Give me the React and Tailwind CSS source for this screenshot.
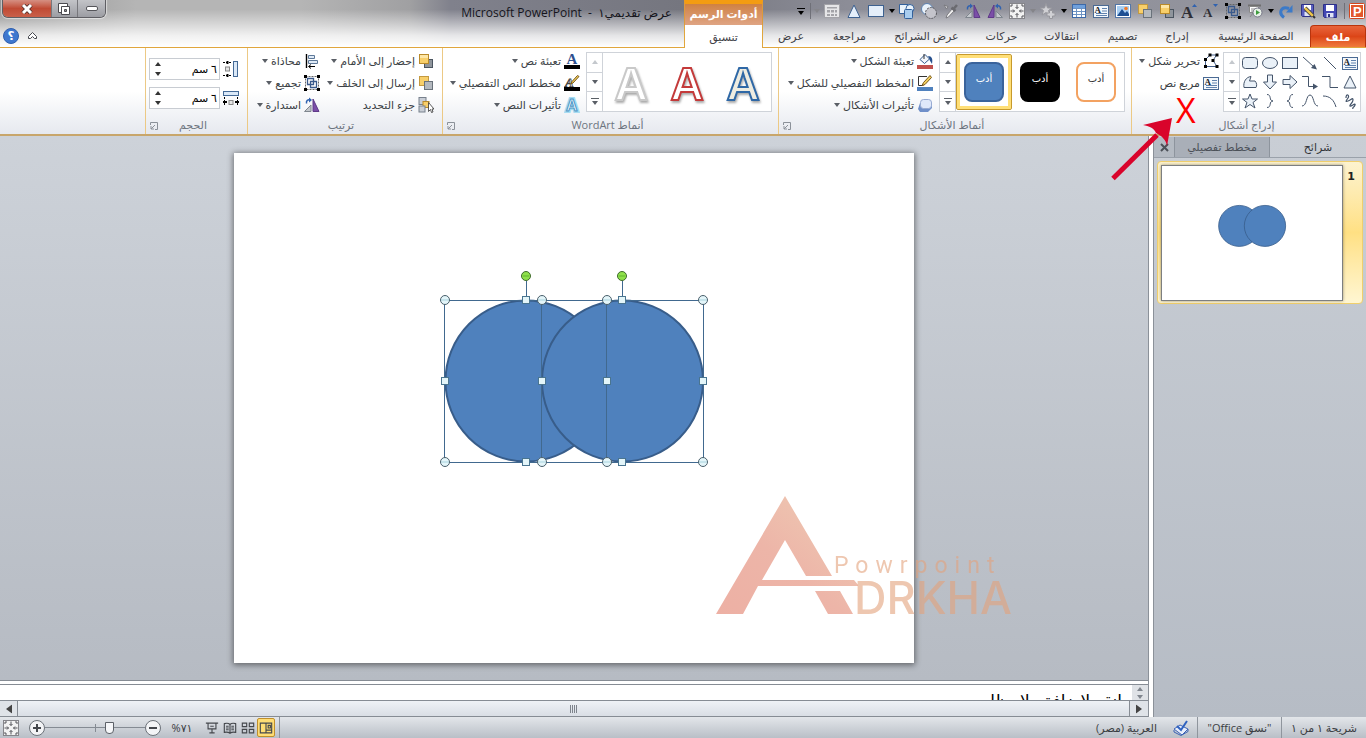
import { useState } from 'react';
import clsx from 'clsx';

const LINE = '#44546a';

const Svg = ({ size = 16, children, className }) => (
  <svg width={size} height={size} viewBox="0 0 16 16" fill="none" className={clsx('shrink-0 [direction:ltr]', className)} aria-hidden="true">
    {children}
  </svg>
);

/* ---------- icons ---------- */

const TextBoxIcon = () => (
  <Svg>
    <rect x="0.5" y="2.5" width="15" height="12" fill="#f4f8fc" stroke="#4a6a94" />
    <text x="1.5" y="9.5" fontSize="9" fontWeight="bold" fill="#222" fontFamily="Liberation Serif, serif">A</text>
    <path d="M9 5.5h5M9 8h5M3 10.5h11M3 12.5h11" stroke="#5f82ae" />
  </Svg>
);

const SaveIcon = () => (
  <Svg>
    <path d="M1.5 1.5h13v13h-12l-1-1z" fill="#4348b4" stroke="#2d3187" />
    <rect x="4" y="2" width="8" height="6" fill="#fff" />
    <rect x="4.5" y="10" width="7" height="4.5" fill="#dfe4f5" />
    <rect x="6" y="11" width="2" height="3" fill="#2d3187" />
  </Svg>
);

const SaveAsIcon = () => (
  <Svg>
    <path d="M1.5 1.5h12v12h-11l-1-1z" fill="#5b60c0" stroke="#2d3187" />
    <rect x="4" y="2" width="7" height="5" fill="#fff" />
    <rect x="4.5" y="9" width="6" height="4" fill="#dfe4f5" />
    <path d="M5 5l8 8" stroke="#4a4a4a" strokeWidth="4" />
    <path d="M5 5l8 8" stroke="#f1c84b" strokeWidth="2.4" />
    <path d="M13 13l2 2" stroke="#333" strokeWidth="2" />
  </Svg>
);

const RedoIcon = () => (
  <Svg>
    <path d="M6 14.5C0 10 3 2.500 11 5.500" stroke="#3c7ac8" strokeWidth="3" />
    <path d="M8 9.500h6.500V2z" fill="#3c7ac8" />
  </Svg>
);

const ShowIcon = () => (
  <Svg>
    <path d="M1 2.5h13" stroke="#6f6f6f" strokeWidth="2" />
    <path d="M2.5 3.5h9v6h-9z" fill="#fff" stroke="#888" />
    <path d="M4 6h5M4 8h4M6 10l-3 4" stroke="#888" />
    <circle cx="10.5" cy="9.5" r="4.5" fill="#e8f0e8" stroke="#778" />
    <path d="M9 7l4 2.5L9 12z" fill="#3d9b3d" />
  </Svg>
);

const GroupIcon = () => (
  <Svg>
    <path d="M1.5 1.5h13v13h-13z" stroke="#666" strokeDasharray="2 1" />
    <path d="M3.500 3.500h6v6h-6zM6.500 6.500h6v6h-6z" stroke="#3a5a8c" strokeWidth="1.300" />
    <path d="M0 0h3v3H0zM13 0h3v3h-3zM0 13h3v3H0zM13 13h3v3h-3z" fill="#000" />
  </Svg>
);

const FontSizeIcon = ({ up }) => (
  <Svg>
    <text x="0" y={up ? 15 : 14} fontSize={up ? 17 : 13} fontWeight="bold" fill="#2f2f36" fontFamily="Liberation Serif, serif">A</text>
    {up ? <path d="M11 4l2.5-3L16 4z" fill="#2f62b0" /> : <path d="M10 1h5l-2.500 3z" fill="#2f62b0" />}
  </Svg>
);

const FrontIcon = () => (
  <Svg>
    <rect x="6.500" y="6.500" width="8" height="8" fill="#8f959c" stroke="#4b5560" />
    <rect x="1.500" y="1.500" width="9" height="9" fill="#f8cf6a" stroke="#b98a2a" />
    <path d="M2 2h8v3H2z" fill="#fde6a6" />
  </Svg>
);

const BackIcon = () => (
  <Svg>
    <rect x="1.500" y="1.500" width="9" height="9" fill="#f8cf6a" stroke="#c49a41" />
    <rect x="6.500" y="6.500" width="8" height="8" fill="#b4b9bf" stroke="#6a727b" />
  </Svg>
);

const PictureIcon = () => (
  <Svg>
    <rect x="0.500" y="1.500" width="15" height="13" fill="#fff" stroke="#5377a8" />
    <rect x="2" y="3" width="12" height="10" fill="#a9cff3" />
    <path d="M2 13l5-7 3 4 2-2 2 3v2z" fill="#1d4f93" />
    <circle cx="11" cy="5.500" r="1.800" fill="#f07a2a" />
  </Svg>
);

const TableIcon = () => (
  <Svg>
    <rect x="1.500" y="1.500" width="13" height="13" fill="#fff" stroke="#3d69a8" />
    <path d="M2 2h12v3H2z" fill="#6fa0dc" />
    <path d="M2 5.500h12M2 8.500h12M2 11.500h12M5.500 5v9M10.500 5v9" stroke="#6d93c4" />
  </Svg>
);

const StarsIcon = () => (
  <Svg>
    <path d="M6 0.500l1.500 4.500H12L8.500 7.500 10 12 6 9.500 2 12l1.500-4.500L0 5h4.500z" fill="#d0d0d4" stroke="#98989e" />
    <path d="M9.500 7.500h3v2.500h2.500v3h-2.500v2.500h-3v-2.500H7v-3h2.500z" fill="#d0d0d4" stroke="#98989e" />
  </Svg>
);

const FitIcon = () => (
  <Svg>
    <rect x="0.500" y="0.500" width="15" height="15" fill="#f2f2f2" stroke="#85858a" />
    <path d="M8 1.500v4M8 10.500v4M1.500 8h4M10.500 8h4M6.500 4L8 5.500 9.500 4M6.500 12L8 10.500 9.500 12M4 6.500L5.500 8 4 9.500M12 6.500L10.500 8 12 9.500" stroke="#55555a" />
    <path d="M2 4V2h2M12 2h2v2M14 12v2h-2M4 14H2v-2" stroke="#55555a" />
  </Svg>
);

const FlipIcon = ({ mirror }) => (
  <Svg className={mirror ? '-scale-x-100' : ''}>
    <path d="M9 2v12.500h6z" fill="#7b4ea8" stroke="#5f3a88" />
    <path d="M7 8v6.500H0.500z" fill="#c3c7cc" stroke="#7f868e" />
    <path d="M2.500 6.500C2 3.500 4 2.500 6 3" stroke="#2f62b0" strokeWidth="1.500" />
    <path d="M5 0.500L8 3 5 5.500z" fill="#2f62b0" />
  </Svg>
);

const DropperIcon = () => (
  <Svg>
    <path d="M3 15l1-3 5-6 2 2-5.500 6z" fill="#eee" stroke="#7b7b80" />
    <path d="M8.500 4.500l4 3.500M10.500 6l3.500-4" stroke="#6a6a70" strokeWidth="2.500" />
    <path d="M1 2l4 1.500-1.500 2.500z" fill="#d5d5d9" stroke="#7b7b80" />
  </Svg>
);

const SubtractIcon = () => (
  <Svg>
    <circle cx="6" cy="6" r="5.500" fill="#eaf3fb" stroke="#5d82b0" />
    <circle cx="10" cy="10" r="5.500" fill="#c4c4cb" stroke="#55555a" strokeDasharray="2 1" />
  </Svg>
);

const UnionIcon = () => (
  <Svg>
    <path d="M0.500 1.500h9v9h-9z" fill="#eaf3fb" stroke="#33619b" />
    <circle cx="11" cy="5.500" r="4" fill="#eaf3fb" stroke="#33619b" />
    <rect x="5.500" y="6.500" width="8" height="9" rx="1" fill="#a9cdef" stroke="#33619b" />
  </Svg>
);

const RectIcon = () => (
  <Svg>
    <rect x="0.500" y="2.500" width="15" height="11" fill="#e4eefa" stroke="#3d6190" />
  </Svg>
);

const TriangleIcon = () => (
  <Svg>
    <path d="M8 2l6 12.500H2z" fill="#e4eefa" stroke="#3d6190" />
  </Svg>
);

const GridGreyIcon = () => (
  <Svg>
    <rect x="0.500" y="1.500" width="15" height="13" fill="#e6e6e8" stroke="#a3a3a8" />
    <path d="M3 4h10v1.500H3zM3 7h3v2.500H3zM7 7h3v2.500H7zM11 7h2v2.500h-2zM3 11h3v2H3zM7 11h3v2H7zM11 11h2v2h-2z" fill="#a3a3a8" />
  </Svg>
);

const EditShapeIcon = () => (
  <Svg>
    <path d="M2.500 13.500V6.500L7 2h6.500L10 7.500l4 6z" stroke="#44608c" />
    <path d="M5.500 0.500h3v3h-3zM12.500 0.500h3v3h-3zM1 5h3v3H1zM8.500 6h3v3h-3zM1 12h3v3H1zM12.500 12h3v3h-3z" fill="#000" />
  </Svg>
);

const FillShapeIcon = () => (
  <Svg>
    <path d="M3 6.500L8 1.500l4.500 4.500-5 4.500z" fill="#f3f6fa" stroke="#345a8c" />
    <path d="M7 1v5" stroke="#333" />
    <path d="M11 3c4 0 5 3 4 8-1-2-3-4-3-6z" fill="#26508e" />
    <rect y="12" width="16" height="4" fill="#c0504d" />
  </Svg>
);

const OutlineShapeIcon = () => (
  <Svg>
    <path d="M10 1.500H1.500v9h5" stroke="#333" />
    <path d="M14.500 2.500L8 9.500l-3 1 1.500-3L13 0.500z" fill="#f0cd5c" stroke="#7a5a1c" />
    <rect y="12" width="16" height="4" fill="#4f81bd" />
  </Svg>
);

const EffectsShapeIcon = () => (
  <Svg>
    <path d="M3 6l-2 6 2 3h8l4-4V5z" fill="#6f8fc9" />
    <rect x="3.500" y="2.500" width="11" height="9" rx="3" fill="#dfe8fa" stroke="#98abd2" />
  </Svg>
);

const FillTextIcon = () => (
  <Svg>
    <text x="2.500" y="11" fontSize="15" fontWeight="bold" fill="#2e4f8e" fontFamily="Liberation Serif, serif">A</text>
    <rect y="12" width="16" height="4" fill="#000" />
  </Svg>
);

const OutlineTextIcon = () => (
  <Svg>
    <text x="1" y="11.500" fontSize="13" fontStyle="italic" fontWeight="bold" fill="#fff" stroke="#444" strokeWidth="0.800" fontFamily="Liberation Serif, serif">A</text>
    <path d="M15 1.500L9 8l-2.500 1L8 6.500 13.500 0.500z" fill="#f0cd5c" stroke="#7a5a1c" />
    <rect y="12" width="16" height="4" fill="#000" />
  </Svg>
);

const EffectsTextIcon = () => (
  <Svg>
    <text x="2" y="14" fontSize="16" fontWeight="bold" fill="#fff" stroke="#a6dcf2" strokeWidth="4" fontFamily="Liberation Sans, sans-serif">A</text>
    <text x="2" y="14" fontSize="16" fontWeight="bold" fill="#f2fbff" stroke="#4c94c4" fontFamily="Liberation Sans, sans-serif">A</text>
  </Svg>
);

const SelectionPaneIcon = () => (
  <Svg>
    <rect x="1" y="0.500" width="7" height="7" fill="#c9ced6" stroke="#77808c" />
    <rect x="5" y="4.500" width="6" height="6" fill="#f8cf6a" stroke="#b98a2a" />
    <rect x="1" y="9" width="6" height="6" fill="#c9ced6" stroke="#77808c" />
    <path d="M10.500 5.500v9l2-2 1 3 1.500-0.500-1-3h2z" fill="#fff" stroke="#333" strokeWidth="0.800" />
  </Svg>
);

const AlignIcon = () => (
  <Svg>
    <path d="M2.500 1v14" stroke="#000" strokeWidth="1.400" />
    <path d="M4.500 2.500h6v3h-6zM4.500 7.500h9v3h-9z" fill="#dfeaf6" stroke="#5d7898" />
    <path d="M5 13.500h6M7 11.500l-2.500 2L7 15.500" stroke="#000" />
  </Svg>
);

const HeightIcon = () => (
  <Svg>
    <rect x="10.500" y="0.500" width="4" height="15" fill="#dbe9f8" stroke="#456a96" />
    <path d="M0 1.500h9M0 14.500h9" stroke="#000" strokeDasharray="2 1" />
    <path d="M4.500 0v3M4.500 13v3" stroke="#000" strokeWidth="2" />
    <rect x="2.500" y="6" width="4" height="4" fill="#e5e5e5" stroke="#888" />
  </Svg>
);

const WidthIcon = () => (
  <Svg>
    <rect x="0.500" y="1.500" width="15" height="4" fill="#dbe9f8" stroke="#456a96" />
    <path d="M1.500 7v9M14.500 7v9" stroke="#000" strokeDasharray="2 1" />
    <path d="M0 12h4M12 12h4" stroke="#000" strokeWidth="2" />
    <rect x="6" y="10.500" width="4" height="4" fill="#e5e5e5" stroke="#888" />
  </Svg>
);

/* ---------- small parts ---------- */

const Caret = ({ className = 'text-[#5a5f66]' }) => (
  <svg width="6" height="4" viewBox="0 0 6 4" className={clsx('shrink-0', className)} aria-hidden="true">
    <path d="M0 0h6L3 4z" fill="currentColor" />
  </svg>
);

const GalleryScroll = ({ firstDisabled }) => (
  <div className="flex w-4 flex-col border-r border-[#cfd3d9] bg-white">
    <button aria-label="أعلى" className="flex flex-1 items-center justify-center border-b border-[#cfd3d9]">
      <Caret className={clsx('rotate-180', firstDisabled ? 'text-[#c4c8cd]' : 'text-[#5a5f66]')} />
    </button>
    <button aria-label="أسفل" className="flex flex-1 items-center justify-center border-b border-[#cfd3d9]">
      <Caret />
    </button>
    <button aria-label="المزيد" className="flex flex-1 flex-col items-center justify-center gap-0.5">
      <span className="h-px w-2 bg-[#5a5f66]" />
      <Caret />
    </button>
  </div>
);

const Gallery = ({ firstDisabled, children }) => (
  <div className="mt-1 flex h-[60px] border border-[#cfd3d9] bg-white">
    {children}
    <GalleryScroll firstDisabled={firstDisabled} />
  </div>
);

const Group = ({ title, launcher, className, children }) => (
  <section className={clsx('relative flex flex-col border-l border-l-[#ecc985]', className)}>
    <div className="flex h-[69px] items-start">{children}</div>
    <div className="flex flex-1 items-start justify-center text-[11px] leading-4 text-[#6d7580]">
      {title}
      {launcher && (
        <button aria-label="خيارات" className="absolute bottom-1 left-1">
          <svg width="8" height="8" viewBox="0 0 8 8" fill="none" stroke="#8b9199">
            <path d="M0.500 3V0.500H7.500V7.500H5M5 3L1 7M1 4v3h3" />
          </svg>
        </button>
      )}
    </div>
  </section>
);

const Command = ({ icon, label, caret }) => (
  <button className="flex h-[22px] items-center gap-[3px] whitespace-nowrap text-[11px] leading-4 text-[#3b3f45]">
    {icon}
    <span>{label}</span>
    {caret && <Caret />}
  </button>
);

/* ---------- title bar and tabs ---------- */

const QUICK = [
  { name: 'حفظ', icon: <SaveIcon /> },
  { name: 'حفظ باسم', icon: <SaveAsIcon /> },
  { name: 'إعادة', icon: <RedoIcon />, caret: 'text-black' },
  { name: 'عرض الشرائح', icon: <ShowIcon /> },
  { name: 'تجميع', icon: <GroupIcon /> },
  { name: 'تصغير الخط', icon: <FontSizeIcon /> },
  { name: 'تكبير الخط', icon: <FontSizeIcon up /> },
  { name: 'إلى الأمام', icon: <FrontIcon /> },
  { name: 'إلى الخلف', icon: <BackIcon /> },
  { name: 'صورة', icon: <PictureIcon /> },
  { name: 'مربع نص', icon: <TextBoxIcon /> },
  { name: 'جدول', icon: <TableIcon />, caret: 'text-black' },
  { name: 'حركة', icon: <StarsIcon />, caret: 'text-[#85858a]' },
  { name: 'احتواء', icon: <FitIcon /> },
  { name: 'انعكاس أفقي', icon: <FlipIcon mirror /> },
  { name: 'انعكاس عمودي', icon: <FlipIcon /> },
  { name: 'قطارة', icon: <DropperIcon /> },
  { name: 'طرح', icon: <SubtractIcon /> },
  { name: 'اتحاد', icon: <UnionIcon />, caret: 'text-black' },
  { name: 'مستطيل', icon: <RectIcon /> },
  { name: 'مثلث', icon: <TriangleIcon /> },
  { name: 'تخطيط', icon: <GridGreyIcon />, caret: 'text-[#85858a]' },
];

const TABS = [
  { label: 'الصفحة الرئيسية', width: 'w-[108px]' },
  { label: 'إدراج', width: 'w-[50px]' },
  { label: 'تصميم', width: 'w-[59px]' },
  { label: 'انتقالات', width: 'w-[63px]' },
  { label: 'حركات', width: 'w-[57px]' },
  { label: 'عرض الشرائح', width: 'w-[93px]' },
  { label: 'مراجعة', width: 'w-[61px]' },
  { label: 'عرض', width: 'w-[56px]' },
];

const TitleBar = () => (
  <div className="flex h-[25px]">
    <div className="flex h-[22px] items-center">
      <div className="flex w-[18px] justify-center">
        <Svg>
          <rect x="0.500" y="0.500" width="15" height="15" rx="1" fill="#fff" stroke="#d2451e" />
          <rect x="2" y="2" width="12" height="12" fill="#e2582c" />
          <text x="4" y="13" fontSize="13" fontWeight="bold" fill="#fff" fontFamily="Liberation Sans, sans-serif">P</text>
        </Svg>
      </div>
      <span className="mx-[3px] h-4 w-px bg-[#6f7078]" />
      {QUICK.map(({ name, icon, caret }) => (
        <button key={name} aria-label={name} className="flex items-center">
          <span className="flex w-[22px] justify-center">{icon}</span>
          {caret && <span className="flex w-[9px] justify-center"><Caret className={caret} /></span>}
        </button>
      ))}
      <span className="mx-px h-4 w-px bg-[#6f7078]" />
      <button aria-label="تخصيص" className="flex w-4 flex-col items-center gap-0.5">
        <span className="h-px w-2 bg-black" />
        <Caret className="text-black" />
      </button>
    </div>
    <div className="mr-auto flex w-[79px] items-center justify-center border-x border-t-4 border-[#f39c12] border-x-[#dd9a3c] bg-linear-to-b from-[#cf8142] to-[#dfa483] text-[11px] font-bold text-white">
      أدوات الرسم
    </div>
    <div className="flex w-[684px] justify-between pl-0.5">
      <h1 className="mr-3 pt-1 text-[12px] leading-[18px] text-[#15151c]">عرض تقديمي١&nbsp; -&nbsp; Microsoft PowerPoint</h1>
      <div className="flex h-[18px] overflow-hidden rounded-b-md border border-t-0 border-[#5e5e63] shadow-[0_0_1px_1px_#ffffff88]">
        <button aria-label="تصغير" className="flex w-[27px] items-center justify-center bg-linear-to-b from-[#c3c4c8] to-[#9c9da3]">
          <span className="h-[5px] w-3 rounded-xs border border-[#55555a] bg-white" />
        </button>
        <button aria-label="استعادة" className="flex w-[27px] items-center justify-center border-x border-[#77777c] bg-linear-to-b from-[#c3c4c8] to-[#9c9da3]">
          <svg width="13" height="12" viewBox="0 0 13 12" fill="none" stroke="#4b4b50">
            <path d="M0.500 0.500h9v9h-9z" fill="#fff" />
            <path d="M3.500 3.500h8v8h-8z" fill="#fff" />
            <path d="M6.500 6.500h2v2h-2z" fill="#999" />
          </svg>
        </button>
        <button aria-label="إغلاق" className="flex w-[48px] items-center justify-center bg-linear-to-b from-[#d58f82] via-[#c04a34] to-[#c9604a]">
          <svg width="12" height="10" viewBox="0 0 12 10">
            <path d="M2 1l8 8M10 1L2 9" stroke="#4c2a25" strokeWidth="4.500" />
            <path d="M2 1l8 8M10 1L2 9" stroke="#fff" strokeWidth="3" />
          </svg>
        </button>
      </div>
    </div>
  </div>
);

const TabRow = ({ active, onPick }) => (
  <nav className="relative z-20 flex h-[22px] text-[11px] leading-4 text-[#3f4147]">
    <button className="w-14 rounded-t-sm border border-b-0 border-[#b8340d] bg-linear-to-b from-[#e8643a] via-[#dc4517] to-[#f07a3c] font-bold text-white">ملف</button>
    {TABS.map(({ label, width }) => (
      <button key={label} onClick={() => onPick(label)} className={clsx('whitespace-nowrap', width)}>{label}</button>
    ))}
    <button
      onClick={() => onPick('تنسيق')}
      className={clsx('-mb-px mr-auto w-[79px] border-x border-[#e0a63d]', active === 'تنسيق' ? 'bg-white' : 'bg-[#f4e3cf]')}
    >
      تنسيق
    </button>
    <div className="flex w-[684px] items-center justify-end gap-[9px] pl-[3px]">
      <button aria-label="تصغير الشريط">
        <svg width="9" height="8" viewBox="0 0 9 8" fill="#fff" stroke="#44474d">
          <path d="M0.500 4.500l4-4 4 4v2h-2l-2-2-2 2h-2z" />
        </svg>
      </button>
      <button aria-label="تعليمات" className="flex size-4 items-center justify-center rounded-full border border-[#2f5fae] bg-[#3f78cf] font-['DejaVu_Sans'] text-[12px] leading-3 font-bold text-white">؟</button>
    </div>
  </nav>
);

/* ---------- ribbon ---------- */

const pale = '#eaf1f8';

const SHAPES = [
  ['مربع نص', <TextBoxIcon />],
  ['خط', <Svg><path d="M2 2l12 12" stroke={LINE} /></Svg>],
  ['سهم', <Svg><path d="M1 2l11 10" stroke={LINE} /><path d="M15 14.500l-6-1.500 3.500-4z" fill={LINE} /></Svg>],
  ['مستطيل', <Svg><rect x="0.500" y="2.500" width="15" height="11" fill={pale} stroke={LINE} /></Svg>],
  ['شكل بيضاوي', <Svg><ellipse cx="8" cy="8" rx="7.500" ry="5.500" fill={pale} stroke={LINE} /></Svg>],
  ['مستطيل مستدير', <Svg><rect x="0.500" y="2.500" width="15" height="11" rx="3" fill={pale} stroke={LINE} /></Svg>],
  ['مثلث', <Svg><path d="M8 2l6 12H2z" fill={pale} stroke={LINE} /></Svg>],
  ['رابط', <Svg><path d="M0 2.500h8v11h8" stroke={LINE} /></Svg>],
  ['رابط سهم', <Svg><path d="M0 2.500h6.500v10H12" stroke={LINE} /><path d="M11 9.500l5 3-5 3z" fill={LINE} /></Svg>],
  ['سهم أيمن', <Svg><path d="M1 5.500h7V1.500l7 6.500-7 6.500v-4H1z" fill={pale} stroke={LINE} /></Svg>],
  ['سهم سفلي', <Svg><path d="M5.500 1h5v7h4L8 15 1.500 8h4z" fill={pale} stroke={LINE} /></Svg>],
  ['شكل حر', <Svg><path d="M2 13.500C1 8 4 3 9 2.500L7.500 7h5.500c2 2 2 5 1 6.500z" fill={pale} stroke={LINE} /></Svg>],
  ['خربشة', <Svg><path d="M4 5c0-5 4-3 2 0s-3 4 0 3 5-4 5-1-4 5-3 6 6-4 5-1-3 2-2 4" stroke={LINE} strokeWidth="1.200" /></Svg>],
  ['قوس', <Svg><path d="M1 3c7 0 11 4 13 11" stroke={LINE} /></Svg>],
  ['منحنى', <Svg><path d="M0 13C5 13 4 2 8 2s3 11 8 11" stroke={LINE} /></Svg>],
  ['قوس أيسر', <Svg><path d="M11 1.500C6 1.500 9.500 8 5 8c4.500 0 1 6.500 6 6.500" stroke={LINE} /></Svg>],
  ['قوس أيمن', <Svg><path d="M5 1.500c5 0 1.500 6.500 6 6.500-4.500 0-1 6.500-6 6.500" stroke={LINE} /></Svg>],
  ['نجمة', <Svg><path d="M8 1l2 5h5.500l-4.500 3.500L13 15l-5-3.500L3 15l2-5.500L0.500 6H6z" fill={pale} stroke={LINE} /></Svg>],
];

const SHAPE_STYLES = [
  { name: 'برتقالي', box: 'border-[#f3a261] bg-white text-[#333]' },
  { name: 'أسود', box: 'border-black bg-black text-white' },
  { name: 'أزرق', box: 'border-[#3a639b] bg-[#4f81bd] text-white' },
];

const WORDART = [
  { name: 'أزرق', fill: '#eeece1', stroke: '#2f68a6' },
  { name: 'أحمر', fill: '#ffffff', stroke: '#c43a3a' },
  { name: 'رمادي', fill: '#ffffff', stroke: '#c9c9c9' },
];

const SizeField = ({ id, label, icon }) => (
  <div className="flex h-[22px] items-center gap-0.5">
    <label htmlFor={id} className="flex w-[18px] justify-center" aria-label={label}>{icon}</label>
    <div className="flex h-[22px] w-[71px] items-center border border-[#c8ccd2] bg-white">
      <input id={id} defaultValue="٦ سم" className="w-0 flex-1 bg-transparent pr-0.5 text-[11px] leading-4 text-black outline-none" />
      <div className="flex w-4 flex-col items-center gap-1.5">
        <Caret className="rotate-180 text-[#333]" />
        <Caret className="text-[#333]" />
      </div>
    </div>
  </div>
);

const Ribbon = () => {
  const [picked, setPicked] = useState('أزرق');

  return (
    <div className="relative z-10 flex h-[89px] border-t border-b-2 border-[#e0a63d] border-b-[#c8a66b] bg-linear-to-b from-white via-white to-[#e6e9ef]">
      <Group title="إدراج أشكال" className="w-[235px] pr-[5px]">
        <Gallery firstDisabled>
          <div className="grid w-[120px] grid-cols-6 place-items-center">
            {SHAPES.map(([name, icon]) => (
              <button key={name} aria-label={name}>{icon}</button>
            ))}
          </div>
        </Gallery>
        <div className="mr-1 pt-0.5">
          <Command icon={<EditShapeIcon />} label="تحرير شكل" caret />
          <Command icon={<TextBoxIcon />} label="مربع نص" />
        </div>
        <span className="absolute top-[42px] left-[44px] font-['Open_Sans'] text-[34px] leading-10 text-[#f00]">X</span>
        <svg width="66" height="66" viewBox="0 0 66 66" className="absolute top-[67px] -left-[22px]" aria-hidden="true">
          <path d="M3 63.500L47 20" stroke="#d9042b" strokeWidth="5" />
          <path d="M62 3L33 10c6 1 11 3 13 8 6 3 10 7 11 13z" fill="#d9042b" />
        </svg>
      </Group>

      <Group title="أنماط الأشكال" launcher className="w-[353px] pr-1.5">
        <Gallery>
          <div className="flex w-[168px]">
            {SHAPE_STYLES.map(({ name, box }) => (
              <button
                key={name}
                aria-label={name}
                onClick={() => setPicked(name)}
                className={clsx('my-px flex w-14 items-center justify-center rounded-xs border', picked === name ? 'border-[#c79a2c] bg-white shadow-[inset_0_0_0_3px_#ffdf77]' : 'border-transparent')}
              >
                <span className={clsx('flex size-10 items-center justify-center rounded-lg border-2 pb-2 text-[10px] leading-4', box)}>أدب</span>
              </button>
            ))}
          </div>
        </Gallery>
        <div className="mr-1.5 pt-0.5">
          <Command icon={<FillShapeIcon />} label="تعبئة الشكل" caret />
          <Command icon={<OutlineShapeIcon />} label="المخطط التفصيلي للشكل" caret />
          <Command icon={<EffectsShapeIcon />} label="تأثيرات الأشكال" caret />
        </div>
      </Group>

      <Group title="أنماط WordArt" launcher className="w-[336px] pr-1.5">
        <Gallery firstDisabled>
          <div className="flex w-[168px]">
            {WORDART.map(({ name, fill, stroke }) => (
              <button key={name} aria-label={name} className="flex w-14 items-center justify-center">
                <svg width="44" height="48" viewBox="0 0 44 48" className="drop-shadow-[1px_2px_1px_#00000055]">
                  <text x="22" y="42" textAnchor="middle" fontSize="46" fontWeight="bold" fill={fill} stroke={stroke} strokeWidth="2" fontFamily="Liberation Sans, sans-serif">A</text>
                </svg>
              </button>
            ))}
          </div>
        </Gallery>
        <div className="mr-1.5 pt-0.5">
          <Command icon={<FillTextIcon />} label="تعبئة نص" caret />
          <Command icon={<OutlineTextIcon />} label="مخطط النص التفصيلي" caret />
          <Command icon={<EffectsTextIcon />} label="تأثيرات النص" caret />
        </div>
      </Group>

      <Group title="ترتيب" className="w-[195px] pr-2">
        <div className="w-[114px] pt-0.5">
          <Command icon={<FrontIcon />} label="إحضار إلى الأمام" caret />
          <Command icon={<BackIcon />} label="إرسال إلى الخلف" caret />
          <Command icon={<SelectionPaneIcon />} label="جزء التحديد" />
        </div>
        <div className="pt-0.5">
          <Command icon={<AlignIcon />} label="محاذاة" caret />
          <Command icon={<GroupIcon />} label="تجميع" caret />
          <Command icon={<FlipIcon />} label="استدارة" caret />
        </div>
      </Group>

      <Group title="الحجم" launcher className="w-[102px] pr-[7px]">
        <div className="flex flex-col gap-[7px] pt-2.5">
          <SizeField id="shape-height" label="الارتفاع" icon={<HeightIcon />} />
          <SizeField id="shape-width" label="العرض" icon={<WidthIcon />} />
        </div>
      </Group>
    </div>
  );
};

/* ---------- slides pane ---------- */

const SlidesPane = () => (
  <aside className="flex w-[212px] flex-col bg-linear-to-b from-[#c9ced5] to-[#b6bcc5]">
    <div className="flex h-[22px] border-b border-[#9aa1aa] pt-px text-[11px] text-[#33363b]">
      <button className="flex-1">شرائح</button>
      <button className="w-24 border-x border-[#8d949d] bg-[#a9afb8] text-[#4c5158]">مخطط تفصيلي</button>
      <button aria-label="إغلاق" className="flex w-5 items-center justify-center bg-[#b4bac2]">
        <svg width="9" height="9" viewBox="0 0 9 9"><path d="M1 1l7 7M8 1L1 8" stroke="#4c5158" strokeWidth="2" /></svg>
      </button>
    </div>
    <button className="mx-[3px] mt-[3px] flex h-[143px] items-start justify-end rounded-sm border border-[#f0cf6c] bg-linear-to-b from-[#fdf3cf] via-[#ffe083] to-[#fff6d2] p-[3px]">
      <span className="flex-1 pt-1 text-center font-['DejaVu_Sans'] text-[11px] leading-4 font-bold text-[#222]">1</span>
      <svg width="182" height="136" viewBox="0 0 680 510" preserveAspectRatio="none" className="border border-[#7d7f80] bg-white shadow-[0_0_3px_#00000066]" aria-hidden="true">
        <g fill="#4f81bd" stroke="#385d8a" strokeWidth="3">
          <circle cx="292" cy="228" r="78" />
          <circle cx="389" cy="228" r="78" />
        </g>
      </svg>
    </button>
  </aside>
);

/* ---------- slide editor ---------- */

const HANDLE_ROUND = [[211, 147], [308, 147], [373, 147], [469, 147], [211, 309], [308, 309], [373, 309], [469, 309]];
const HANDLE_SQUARE = [[292, 147], [388, 147], [211, 228], [308, 228], [373, 228], [469, 228], [292, 309], [388, 309]];

const Slide = () => (
  <div className="relative h-[510px] w-[680px] shrink-0 bg-white shadow-[0_1px_6px_1px_#00000077]">
    <svg width="680" height="510" viewBox="0 0 680 510" fill="none" aria-hidden="true">
      <g fill="#4f81bd" stroke="#385d8a" strokeWidth="2">
        <circle cx="292" cy="228" r="80.500" />
        <circle cx="388.500" cy="228" r="80.500" />
      </g>
      <g stroke="#41698f" shapeRendering="crispEdges">
        <rect x="210.500" y="147.500" width="162" height="162" />
        <rect x="307.500" y="147.500" width="162" height="162" />
        <path d="M292 147v-19M388 147v-19" />
      </g>
      {[292, 388].map((x) => (
        <g key={x}>
          <circle cx={x} cy="123" r="4.500" fill="#8ee04a" stroke="#3f6a2c" />
          <path d={`M${x - 3} 123h6`} stroke="#5fb52a" />
        </g>
      ))}
      {HANDLE_ROUND.map(([x, y]) => (
        <g key={`${x}-${y}`}>
          <circle cx={x} cy={y} r="4.500" fill="#e3f5f9" stroke="#4a5f6b" />
          <path d={`M${x - 4} ${y}h8`} stroke="#a9d3de" />
        </g>
      ))}
      {HANDLE_SQUARE.map(([x, y]) => (
        <rect key={`${x}-${y}`} x={x - 3.5} y={y - 3.5} width="7" height="7" fill="#e3f5f9" stroke="#4a7590" />
      ))}
    </svg>
    <div dir="ltr" className="absolute top-[343px] left-[482px] flex text-[#e3a27c]">
      <svg width="142" height="119" viewBox="0 0 142 119" aria-hidden="true">
        <defs>
          <linearGradient id="mark" x1="0" y1="1" x2="1" y2="0">
            <stop offset="0" stopColor="#edb0a4" />
            <stop offset="0.450" stopColor="#edb5a8" />
            <stop offset="1" stopColor="#efcdb5" />
          </linearGradient>
        </defs>
        <path d="M0 118L69 0l47 80H90L69 44 46 84h92l5 6H42L27 118zM99 95h25l13 23h-25z" fill="url(#mark)" />
      </svg>
      <div className="-ml-6 pt-14">
        <p className="font-['Roboto'] text-[23px] leading-7 font-normal tracking-[7px] whitespace-nowrap opacity-60">Powrpoint</p>
        <p className="ml-5 font-['Inter'] text-[45px] leading-9 font-medium opacity-60">DRKHA</p>
      </div>
    </div>
  </div>
);

const Editor = () => (
  <main className="flex min-w-0 flex-1 flex-col">
    <div className="flex min-h-0 flex-1 items-center justify-center bg-linear-to-b from-[#cdd2d9] to-[#b6bbc3]">
      <Slide />
    </div>
    <div className="h-[5px] border-y border-[#868c94] bg-white" />
    <div className="flex h-[15px] bg-white">
      <div className="flex w-4 flex-col items-center justify-center gap-1 bg-[#dfe2e6]">
        <Caret className="rotate-180 text-[#80868e]" />
        <Caret className="text-[#80868e]" />
      </div>
      <textarea aria-label="ملاحظات" defaultValue="انقر لإضافة ملاحظات" className="h-[15px] flex-1 resize-none overflow-hidden px-2.5 pt-1 text-[17px] leading-6 text-black outline-none" />
    </div>
    <div className="flex h-[17px] border-y border-[#868c94] bg-[#dfe3e8]">
      <button aria-label="يمين" className="flex w-[18px] items-center justify-center">
        <Caret className="-rotate-90 scale-150 text-[#444]" />
      </button>
      <div className="flex flex-1 items-center justify-center gap-px border-x border-[#868c94] bg-linear-to-b from-[#eff2f6] to-[#d9dee5]">
        {[0, 1, 2, 3].map((i) => <span key={i} className="h-2 w-px bg-[#7e848c]" />)}
      </div>
      <button aria-label="يسار" className="flex w-[17px] items-center justify-center">
        <Caret className="rotate-90 scale-150 text-[#444]" />
      </button>
    </div>
  </main>
);

/* ---------- status bar ---------- */

const VIEWS = [
  ['عادي', <><path d="M1.500 2.500h13v11h-13zM8 3v10M10.500 5h2.500v3h-2.500zM8 10.500h6" /></>],
  ['فارز الشرائح', <path d="M1.500 2.500h5v4h-5zM9.500 2.500h5v4h-5zM1.500 9.500h5v4h-5zM9.500 9.500h5v4h-5z" />],
  ['قراءة', <path d="M8 4C6 2 3.500 2.500 1.500 3v10c2-0.500 4.500-0.500 6.500 1 2-1.500 4.500-1.500 6.500-1V3C12.500 2.500 10 2 8 4zM8 4v10M3.500 6h3M3.500 8h3M3.500 10h3M9.500 6h3M9.500 8h3M9.500 10h3" />],
  ['عرض الشرائح', <path d="M1 2.500h14M3.500 3v6h9V3M6 6h4M8 9v4M5 13.500h6" />],
];

const StatusBar = () => {
  const [zoom, setZoom] = useState(34);
  const [view, setView] = useState('عادي');

  return (
    <footer className="flex h-[21px] shrink-0 items-center justify-between bg-linear-to-b from-[#e3e6ea] to-[#b9bfc7] text-[11px] leading-4 text-[#3a3d42]">
      <div className="flex h-full items-center divide-x divide-[#8f959d]">
        <span className="flex h-full w-[85px] items-center justify-center">شريحة ١ من ١</span>
        <span className="flex h-full w-[84px] items-center justify-center">"نسق Office"</span>
        <span className="flex h-full w-[111px] items-center gap-4 pr-2">
          <Svg>
            <path d="M1 9l6-4 8 4-6 6z" fill="#e8eefb" stroke="#3b62b5" />
            <path d="M1 10v2l7 3.500 7-4V9" stroke="#3b62b5" />
            <path d="M4 6l4 4 6-9" stroke="#2f62c0" strokeWidth="2" />
          </Svg>
          العربية (مصر)
        </span>
      </div>
      <div className="flex h-full items-center">
        <span className="ml-1 h-full w-px bg-[#8f959d]" />
        {VIEWS.map(([name, drawing]) => (
          <button
            key={name}
            aria-label={name}
            onClick={() => setView(name)}
            className={clsx('flex h-[19px] w-[18px] items-center justify-center rounded-xs', view === name && 'border border-[#c08f2b] bg-[#ffdd74]')}
          >
            <Svg size={14}><g stroke="#45484d" strokeWidth="1.300">{drawing}</g></Svg>
          </button>
        ))}
        <span dir="ltr" className="mx-[9px] w-6 text-center">%٧١</span>
        <button aria-label="تصغير العرض" className="flex size-4 items-center justify-center rounded-full border border-[#6c7279] bg-[#f3f4f6]">
          <span className="h-0.5 w-2 bg-[#44474c]" />
        </button>
        <input
          type="range"
          aria-label="تكبير/تصغير"
          value={zoom}
          onChange={(e) => setZoom(e.target.value)}
          className="h-4 w-[100px] appearance-none bg-[linear-gradient(#858b93,#858b93),linear-gradient(#858b93,#858b93)] bg-[length:100%_1px,1px_8px] bg-center bg-no-repeat [&::-webkit-slider-thumb]:h-3 [&::-webkit-slider-thumb]:w-[9px] [&::-webkit-slider-thumb]:appearance-none [&::-webkit-slider-thumb]:rounded-b-sm [&::-webkit-slider-thumb]:border [&::-webkit-slider-thumb]:border-[#5c6168] [&::-webkit-slider-thumb]:bg-[#f5f6f8]"
        />
        <button aria-label="تكبير العرض" className="flex size-4 items-center justify-center rounded-full border border-[#6c7279] bg-[#f3f4f6]">
          <svg width="8" height="8" viewBox="0 0 8 8"><path d="M4 0v8M0 4h8" stroke="#44474c" strokeWidth="2" /></svg>
        </button>
        <button aria-label="ملاءمة الشريحة" className="mr-2.5 ml-[3px]"><FitIcon /></button>
      </div>
    </footer>
  );
};

const App = () => {
  const [tab, setTab] = useState('تنسيق');

  return (
    <div dir="rtl" className="flex h-screen flex-col overflow-hidden bg-white font-['Open_Sans','DejaVu_Sans',sans-serif]">
      <header className="bg-[linear-gradient(to_bottom,transparent_20%,#ffffffcc_75%,#fff),linear-gradient(to_right,#8f8f8f,#b5b5b5_10%,#b5b5b5_22%,#a0a0a2_30%,#80818c_33%,#75767f_50%,#8c8d97_62%,#95969f)]">
        <TitleBar />
        <TabRow active={tab} onPick={setTab} />
      </header>
      <Ribbon />
      <div className="flex min-h-0 flex-1">
        <SlidesPane />
        <div className="w-1.5 border-x border-[#8b9199] bg-white" />
        <Editor />
      </div>
      <StatusBar />
    </div>
  );
};

export default App;
